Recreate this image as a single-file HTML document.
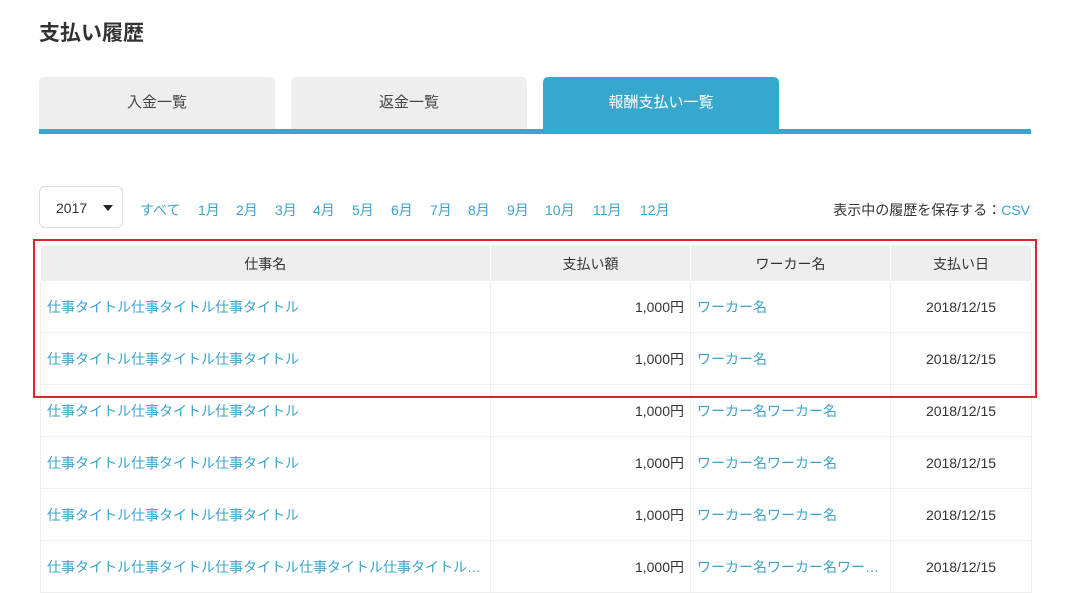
<!DOCTYPE html>
<html><head><meta charset="utf-8"><style>
body{margin:0;background:#fff;font-family:"Liberation Sans","Noto Sans CJK JP",sans-serif;color:#333;font-size:14px;width:1070px;height:593px;overflow:hidden;position:relative}
.a{position:absolute}
h1{position:absolute;left:39px;top:17px;margin:0;font-size:21px;font-weight:bold;color:#333}
.tab{position:absolute;top:77px;width:236px;height:52px;background:#eee;border-radius:5px 5px 0 0;text-align:center;line-height:52px;font-size:15px;color:#444}
.tab.on{background:#36a7cd;color:#fff}
.bar{position:absolute;left:39px;top:129px;width:992px;height:5px;background:#36a7cd}
.sel{position:absolute;left:39px;top:186px;width:84px;height:42px;border:1px solid #ddd;border-radius:6px;box-sizing:border-box;line-height:42px;padding-left:16px;font-size:14px}
.sel:after{content:"";position:absolute;left:63px;top:18px;border:5px solid transparent;border-top:6px solid #222}
.m{position:absolute;top:200px;color:#3aa3cc;font-size:14px}
a{color:#3aa3cc;text-decoration:none}
table{position:absolute;left:40px;top:246px;border-collapse:collapse;width:991px;table-layout:fixed}
th{background:#eee;font-weight:normal;height:35px;padding:0;font-size:14px;border-right:1px solid #fff}
td{height:51px;border:1px solid #eee;border-top:none;padding:0 6px;white-space:nowrap;overflow:hidden}
td:nth-child(2){text-align:right}
td:nth-child(4){text-align:center}
.red{position:absolute;left:33px;top:239px;width:1000px;height:155px;border:2px solid #e2232a}
</style></head><body>
<h1>支払い履歴</h1>
<div class="tab" style="left:39px">入金一覧</div>
<div class="tab" style="left:291px">返金一覧</div>
<div class="tab on" style="left:543px">報酬支払い一覧</div>
<div class="bar"></div>
<div class="sel">2017</div>
<span class="m" style="left:140px">すべて</span>
<span class="m" style="left:198px">1月</span>
<span class="m" style="left:236px">2月</span>
<span class="m" style="left:275px">3月</span>
<span class="m" style="left:313px">4月</span>
<span class="m" style="left:352px">5月</span>
<span class="m" style="left:391px">6月</span>
<span class="m" style="left:430px">7月</span>
<span class="m" style="left:468px">8月</span>
<span class="m" style="left:507px">9月</span>
<span class="m" style="left:545px">10月</span>
<span class="m" style="left:593px">11月</span>
<span class="m" style="left:640px">12月</span>
<span class="a" style="right:40px;top:200px">表示中の履歴を保存する：<a>CSV</a></span>
<table>
<colgroup><col style="width:450px"><col style="width:200px"><col style="width:200px"><col style="width:141px"></colgroup>
<tr><th>仕事名</th><th>支払い額</th><th>ワーカー名</th><th>支払い日</th></tr>
<tr><td><a>仕事タイトル仕事タイトル仕事タイトル</a></td><td>1,000円</td><td><a>ワーカー名</a></td><td>2018/12/15</td></tr>
<tr><td><a>仕事タイトル仕事タイトル仕事タイトル</a></td><td>1,000円</td><td><a>ワーカー名</a></td><td>2018/12/15</td></tr>
<tr><td><a>仕事タイトル仕事タイトル仕事タイトル</a></td><td>1,000円</td><td><a>ワーカー名ワーカー名</a></td><td>2018/12/15</td></tr>
<tr><td><a>仕事タイトル仕事タイトル仕事タイトル</a></td><td>1,000円</td><td><a>ワーカー名ワーカー名</a></td><td>2018/12/15</td></tr>
<tr><td><a>仕事タイトル仕事タイトル仕事タイトル</a></td><td>1,000円</td><td><a>ワーカー名ワーカー名</a></td><td>2018/12/15</td></tr>
<tr><td><a>仕事タイトル仕事タイトル仕事タイトル仕事タイトル仕事タイトル…</a></td><td>1,000円</td><td><a>ワーカー名ワーカー名ワー…</a></td><td>2018/12/15</td></tr>
</table>
<div class="red"></div>
</body></html>
